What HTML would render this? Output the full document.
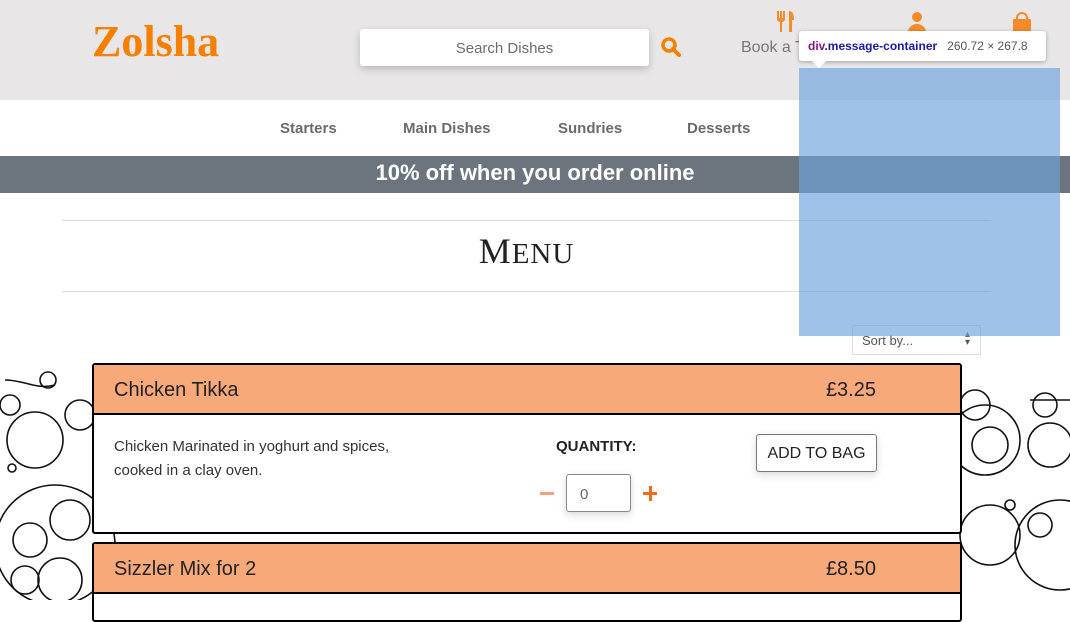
<!DOCTYPE html>
<html><head><meta charset="utf-8"><style>
*{margin:0;padding:0;box-sizing:border-box}
body{width:1070px;height:600px;overflow:hidden;position:relative;background:#fff;font-family:"Liberation Sans","DejaVu Sans",sans-serif}
.hdr{position:absolute;left:0;top:0;width:1070px;height:100px;background:#e8e6e6}
.logo{position:absolute;left:92px;top:16px;font-family:"Liberation Serif",serif;font-weight:bold;font-size:44px;color:#f77f00;letter-spacing:0px}
.search{position:absolute;left:360px;top:29px;width:289px;height:37px;background:#fff;border-radius:3px;box-shadow:0 3px 8px rgba(0,0,0,.2);text-align:center;line-height:40px;color:#6c6c6c;font-size:15px}
.nav{position:absolute;top:120px;font-size:15px;font-weight:bold;color:#6b6b6b}
.banner{position:absolute;left:0;top:156px;width:1070px;height:37px;background:#6c757d;color:#fff;font-size:22px;font-weight:bold;text-align:center;line-height:33px}
.hr{position:absolute;left:62px;width:929px;height:1px;background:#ddd}
.menu{position:absolute;left:0;width:1053px;top:230px;text-align:center;font-family:"Liberation Serif",serif;font-size:36px;color:#222;letter-spacing:1px}
.sort{position:absolute;left:852px;top:325px;width:129px;height:30px;border:1px solid #ddd;font-size:13px;color:#555;padding:7px 9px}
.card{position:absolute;left:92px;width:870px;border:2px solid #000;border-radius:3px;background:#fff}
.ch{height:50px;background:#f8a97a;border-bottom:2px solid #000;font-size:20px;color:#222;padding:14px 20px;position:relative}
.ch span{position:absolute;right:84px;top:14px}
.desc{position:absolute;left:20px;top:70px;font-size:15px;line-height:24px;color:#333}
.qty{position:absolute;left:462px;top:73px;font-size:15px;font-weight:bold;color:#222}
.inp{position:absolute;left:472px;top:109px;width:65px;height:38px;border:1px solid #888;border-radius:3px;font-size:15px;color:#666;padding:11px 13px;box-shadow:0 3px 8px rgba(0,0,0,.15)}
.btn{position:absolute;left:662px;top:69px;width:121px;height:38px;border:1px solid #777;border-radius:3px;text-align:center;line-height:37px;font-size:16px;color:#222;box-shadow:0 3px 8px rgba(0,0,0,.15)}
.ov{position:absolute;left:799px;top:68px;width:261px;height:268px;background:rgba(111,163,220,.66)}
.tip{position:absolute;left:799px;top:31px;width:247px;height:30px;background:#fff;border-radius:3px;box-shadow:0 1px 4px rgba(0,0,0,.3);font-size:12px;line-height:30px;padding-left:9px}
</style></head><body>
<div class="hdr"></div>
<div class="logo">Zolsha</div>
<div class="search">Search Dishes</div>
<svg style="position:absolute;left:660px;top:36px" width="24" height="22"><circle cx="9" cy="9" r="6" fill="none" stroke="#f77f00" stroke-width="3.5"/><path d="M13 13 L19 19" stroke="#f77f00" stroke-width="4" stroke-linecap="round"/></svg>
<svg style="position:absolute;left:776px;top:11px" width="20" height="22" fill="#f68b2a"><path d="M1 0h2v7h1V0h2v7h1V0h2v8a3 3 0 0 1-3 3v10H4V11a3 3 0 0 1-3-3z"/><path d="M13 0c4 0 5 4 5 9h-2v12h-3z"/></svg>
<div style="position:absolute;left:741px;top:39px;font-size:16px;color:#777">Book a T</div>
<svg style="position:absolute;left:906px;top:12px" width="22" height="20" fill="#f68b2a"><circle cx="11" cy="5" r="5"/><path d="M2 20a9 8 0 0 1 18 0z"/></svg>
<svg style="position:absolute;left:1011px;top:12px" width="22" height="20" fill="#f68b2a"><path d="M6 8V6a5 5 0 0 1 10 0v2" fill="none" stroke="#f68b2a" stroke-width="2"/><rect x="2" y="7" width="18" height="13" rx="1"/></svg>
<div class="nav" style="left:280px">Starters</div>
<div class="nav" style="left:403px">Main Dishes</div>
<div class="nav" style="left:558px">Sundries</div>
<div class="nav" style="left:687px">Desserts</div>
<div class="banner">10% off when you order online</div>
<div class="hr" style="top:220px"></div>
<div class="menu">M<span style="font-size:29px">ENU</span></div>
<div class="hr" style="top:291px"></div>
<div class="sort">Sort by...<span style="position:absolute;right:10px;top:5px;font-size:10px;line-height:8px">▴<br>▾</span></div>
<svg style="position:absolute;left:0;top:365px" width="1070" height="235" fill="none" stroke="#111" stroke-width="1.6">
<circle cx="55" cy="180" r="60"/><circle cx="30" cy="175" r="17"/><circle cx="70" cy="155" r="20"/><circle cx="25" cy="215" r="14"/><circle cx="60" cy="215" r="22"/><circle cx="35" cy="75" r="28"/><circle cx="80" cy="50" r="15"/><circle cx="10" cy="40" r="10"/><circle cx="12" cy="103" r="4"/><path d="M5 15c20 0 30 10 50 5"/><circle cx="48" cy="15" r="8"/>
<circle cx="985" cy="75" r="35"/><circle cx="990" cy="80" r="18"/><circle cx="975" cy="40" r="15"/><circle cx="1045" cy="40" r="12"/><circle cx="1050" cy="80" r="22"/><circle cx="1060" cy="180" r="45"/><circle cx="1040" cy="160" r="12"/><circle cx="1010" cy="140" r="5"/><path d="M1030 35h40"/><circle cx="990" cy="170" r="30"/><circle cx="230" cy="230" r="45"/><circle cx="560" cy="230" r="40"/><circle cx="800" cy="235" r="30"/><circle cx="450" cy="228" r="25"/>
</svg>
<div class="card" style="top:363px;height:171px"><div class="ch">Chicken Tikka<span>£3.25</span></div>
<div class="desc">Chicken Marinated in yoghurt and spices,<br>cooked in a clay oven.</div>
<div class="qty">QUANTITY:</div>
<div style="position:absolute;left:446px;top:127px;width:14px;height:3px;background:#f4a27a"></div>
<div class="inp">0</div>
<div style="position:absolute;left:549px;top:127px;width:14px;height:3px;background:#f26b1d"></div><div style="position:absolute;left:554.5px;top:121px;width:3px;height:15px;background:#f26b1d"></div>
<div class="btn">ADD TO BAG</div></div>
<div class="card" style="top:542px;height:80px"><div class="ch">Sizzler Mix for 2<span>£8.50</span></div></div>
<div class="ov"></div>
<div class="tip"><b style="color:#881280">div</b><b style="color:#1a1aa6">.message-container</b><span style="color:#555;margin-left:10px;font-size:12px">260.72 × 267.8</span></div>
<div style="position:absolute;left:811px;top:60px;width:0;height:0;border-left:8px solid transparent;border-right:8px solid transparent;border-top:8px solid #fff"></div>
</body></html>
